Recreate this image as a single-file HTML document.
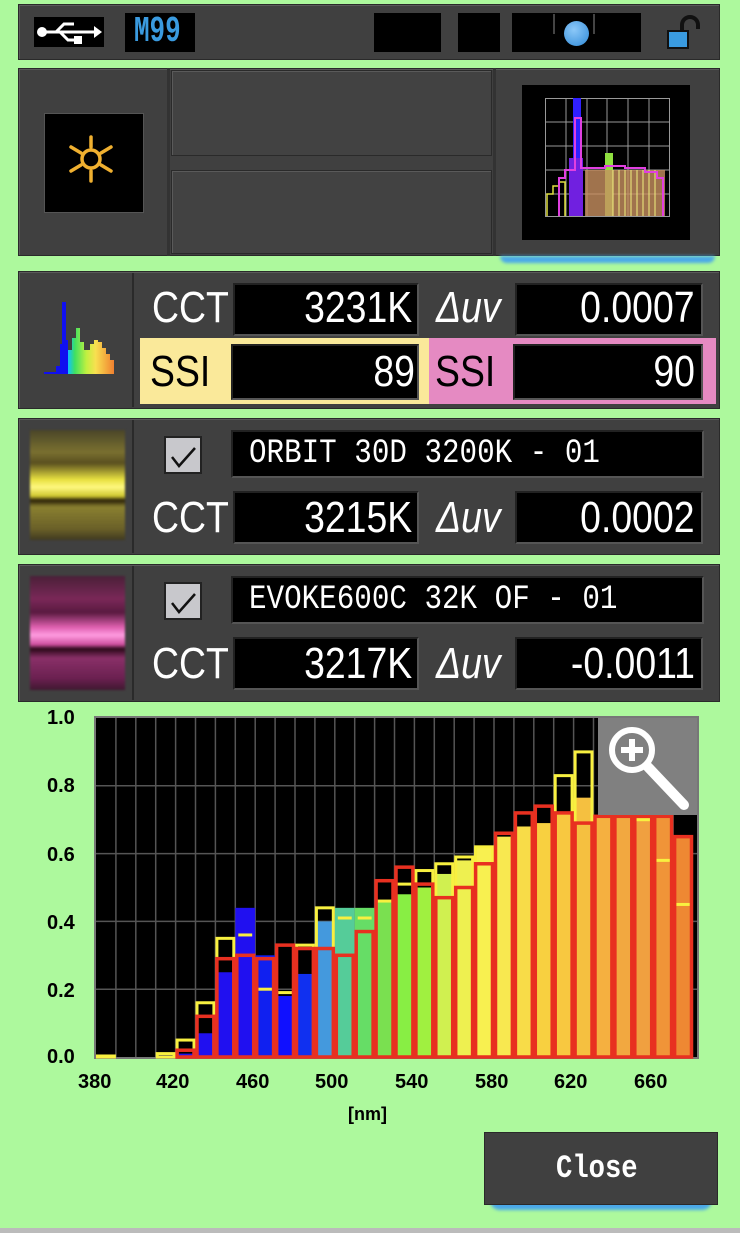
<!DOCTYPE html>
<html><head><meta charset="utf-8">
<style>
*{margin:0;padding:0;box-sizing:border-box}
body{width:740px;height:1233px;background:#adf99d;position:relative;overflow:hidden;font-family:"Liberation Sans Narrow","Liberation Sans",sans-serif}
.a{position:absolute}
.p{position:absolute;background:#404040;border:1px solid #2a2a2a;box-shadow:inset 1px 1px 0 #5a5a5a}
.bk{position:absolute;background:#000;border:2px solid #555;border-top-color:#222;border-left-color:#222}
.t{position:absolute;color:#fff;font-size:44px;line-height:1;white-space:nowrap;transform:scaleX(0.85);transform-origin:left top}
.v{position:absolute;color:#fff;font-size:44px;line-height:1;white-space:nowrap;text-align:right;transform:scaleX(0.85);transform-origin:right top}
.nm{color:#fff;font-size:34px;font-family:"Liberation Mono",monospace;position:absolute;white-space:nowrap;transform:scaleX(0.86);transform-origin:left top}
.cb{position:absolute;width:38px;height:38px;background:#c8c8cc;border:2px solid #222}
.ax{position:absolute;font-family:"Liberation Sans",sans-serif;font-weight:bold;font-size:20px;color:#000;line-height:1}
</style></head><body>
<div class="a" style="left:0;top:1228px;width:740px;height:5px;background:#bbb"></div>
<!-- top bar -->
<div class="p" style="left:18px;top:4px;width:702px;height:56px"></div>
<div class="a" style="left:34px;top:17px;width:70px;height:30px;background:#000"></div>
<svg class="a" style="left:36px;top:20px" width="66" height="24" viewBox="0 0 66 24"><circle cx="6" cy="12" r="5" fill="#fff"/><rect x="6" y="10.5" width="54" height="3" fill="#fff"/><polygon points="58,6 66,12 58,18" fill="#fff"/><path d="M20 12 L28 4 L38 4" stroke="#fff" stroke-width="3" fill="none"/><path d="M24 12 L32 20 L40 20" stroke="#fff" stroke-width="3" fill="none"/><rect x="38" y="16" width="8" height="8" fill="#fff"/></svg>
<div class="a" style="left:125px;top:13px;width:70px;height:39px;background:#000"></div>
<div class="a" style="left:134px;top:11px;color:#3a9be0;font-family:'Liberation Mono',monospace;font-size:36px;font-weight:bold;transform:scaleX(0.72);transform-origin:left top">M99</div>
<div class="a" style="left:374px;top:13px;width:67px;height:39px;background:#000"></div>
<div class="a" style="left:458px;top:13px;width:42px;height:39px;background:#000"></div>
<div class="a" style="left:512px;top:13px;width:129px;height:39px;background:#000"></div>
<div class="a" style="left:553px;top:14px;width:2px;height:20px;background:#444"></div>
<div class="a" style="left:593px;top:14px;width:2px;height:20px;background:#444"></div>
<div class="a" style="left:564px;top:21px;width:25px;height:25px;border-radius:50%;background:radial-gradient(circle at 40% 35%,#8cc8f8,#2f8ad8)"></div>
<svg class="a" style="left:664px;top:15px" width="40" height="36" viewBox="0 0 40 36"><path d="M18 18 V10 a8 8 0 0 1 16 0 V14" stroke="#111" stroke-width="4" fill="none"/><rect x="4" y="16" width="20" height="17" fill="#3a9be0" stroke="#111" stroke-width="2"/></svg>
<!-- second panel -->
<div class="p" style="left:18px;top:68px;width:702px;height:188px"></div>
<div class="a" style="left:167px;top:68px;width:3px;height:188px;background:#333"></div>
<div class="a" style="left:493px;top:68px;width:3px;height:188px;background:#333"></div>
<div class="p" style="left:171px;top:70px;width:321px;height:86px;background:#424242"></div>
<div class="p" style="left:171px;top:170px;width:321px;height:84px;background:#424242"></div>
<div class="a" style="left:44px;top:113px;width:100px;height:100px;background:#000;border:1px solid #555"></div>
<svg class="a" style="left:66px;top:133px" width="50" height="52" viewBox="0 0 50 52"><g stroke="#f0b030" stroke-width="3.5" fill="none" stroke-linecap="round"><circle cx="25" cy="26" r="9"/><line x1="25" y1="4" x2="25" y2="14"/><line x1="25" y1="38" x2="25" y2="48"/><line x1="5" y1="14" x2="15" y2="20"/><line x1="35" y1="32" x2="45" y2="38"/><line x1="5" y1="38" x2="15" y2="32"/><line x1="35" y1="20" x2="45" y2="14"/></g></svg>
<div class="a" style="left:522px;top:85px;width:168px;height:155px;background:#000"></div>
<svg class="a" style="left:545px;top:98px" width="126" height="120" viewBox="0 0 126 120">
<g stroke="#999" stroke-width="1"><rect x="0.5" y="0.5" width="124" height="118" fill="none"/><line x1="21" y1="0" x2="21" y2="119"/><line x1="42" y1="0" x2="42" y2="119"/><line x1="62" y1="0" x2="62" y2="119"/><line x1="83" y1="0" x2="83" y2="119"/><line x1="104" y1="0" x2="104" y2="119"/><line x1="0" y1="24" x2="125" y2="24"/><line x1="0" y1="48" x2="125" y2="48"/><line x1="0" y1="72" x2="125" y2="72"/><line x1="0" y1="96" x2="125" y2="96"/></g>
<path d="M2 118 V96 H8 V88 H14 V84 H20 V118" fill="none" stroke="#e0e040" stroke-width="1.5"/>
<rect x="28" y="0" width="8" height="118" fill="#3020ff"/><rect x="24" y="60" width="14" height="58" fill="#7020e0"/>
<rect x="60" y="55" width="8" height="63" fill="#90e040"/>
<rect x="40" y="72" width="80" height="46" fill="#c89060" opacity=".8"/>
<g stroke="#f0f080" stroke-width="1"><line x1="68" y1="72" x2="68" y2="118"/><line x1="74" y1="72" x2="74" y2="118"/><line x1="80" y1="72" x2="80" y2="118"/><line x1="86" y1="72" x2="86" y2="118"/><line x1="92" y1="72" x2="92" y2="118"/><line x1="98" y1="72" x2="98" y2="118"/><line x1="104" y1="72" x2="104" y2="118"/><line x1="110" y1="72" x2="110" y2="118"/></g>
<path d="M14 118 V80 H20 V72 H30 V20 H36 V70 H60 V68 H80 V70 H100 V74 H112 V80 H118 V118" fill="none" stroke="#e040e0" stroke-width="2"/>
</svg>
<div class="a" style="left:500px;top:256px;width:215px;height:7px;background:#4aa8e8;border-radius:0 0 30px 30px;filter:blur(1.5px)"></div>
<!-- third panel -->
<div class="p" style="left:18px;top:271px;width:702px;height:138px"></div>
<div class="a" style="left:132px;top:273px;width:2px;height:134px;background:#2a2a2a"></div>
<svg class="a" style="left:36px;top:300px" width="82" height="76" viewBox="0 0 82 76"><defs><linearGradient id="sp" x1="0" x2="1"><stop offset="0" stop-color="#10c0ff"/><stop offset=".15" stop-color="#40e060"/><stop offset=".4" stop-color="#c0f040"/><stop offset=".6" stop-color="#f8e050"/><stop offset="1" stop-color="#f08030"/></linearGradient></defs><path d="M32 74 V50 H36 V38 H40 V28 H44 V42 H48 V50 H54 V44 H58 V40 H62 V42 H66 V48 H70 V54 H74 V60 H78 V74Z" fill="url(#sp)"/><path d="M8 74 V72 H20 V66 H24 V44 H26 V2 H30 V40 H32 V74Z" fill="#1010f0"/></svg>
<div class="t" style="left:152px;top:286px">CCT</div>
<div class="bk" style="left:233px;top:283px;width:186px;height:53px"></div>
<div class="v" style="right:328px;top:286px">3231K</div>
<div class="t" style="left:436px;top:286px;font-style:italic">Δuv</div>
<div class="bk" style="left:515px;top:283px;width:188px;height:53px"></div>
<div class="v" style="right:45px;top:286px">0.0007</div>
<div class="a" style="left:140px;top:338px;width:289px;height:66px;background:#fae99a"></div>
<div class="a" style="left:429px;top:338px;width:287px;height:66px;background:#e58ac2"></div>
<div class="t" style="left:150px;top:350px;color:#000">SSI</div>
<div class="t" style="left:435px;top:350px;color:#000">SSI</div>
<div class="bk" style="left:231px;top:344px;width:188px;height:56px"></div>
<div class="bk" style="left:513px;top:344px;width:190px;height:56px"></div>
<div class="v" style="right:325px;top:350px">89</div>
<div class="v" style="right:45px;top:350px">90</div>
<!-- fourth panel -->
<div class="p" style="left:18px;top:418px;width:702px;height:137px"></div>
<div class="a" style="left:132px;top:420px;width:2px;height:133px;background:#2a2a2a"></div>
<div class="a" style="left:30px;top:430px;width:95px;height:110px;background:linear-gradient(#4a4528 0%,#7a7030 20%,#5a5020 30%,#e8e040 45%,#fff880 52%,#d0c830 60%,#2a2008 64%,#8a8030 70%,#6a6028 90%,#403a20 100%);filter:blur(1px)"></div>
<div class="cb" style="left:164px;top:436px"></div>
<svg class="a" style="left:168px;top:440px" width="30" height="30"><path d="M4 17 L11 26 L27 8" stroke="#111" stroke-width="2.5" fill="none"/></svg>
<div class="bk" style="left:231px;top:430px;width:473px;height:48px"></div>
<div class="nm" style="left:249px;top:435px">ORBIT 30D 3200K - 01</div>
<div class="t" style="left:152px;top:496px">CCT</div>
<div class="bk" style="left:233px;top:491px;width:186px;height:53px"></div>
<div class="v" style="right:328px;top:496px">3215K</div>
<div class="t" style="left:436px;top:496px;font-style:italic">Δuv</div>
<div class="bk" style="left:515px;top:491px;width:188px;height:53px"></div>
<div class="v" style="right:45px;top:496px">0.0002</div>
<!-- fifth panel -->
<div class="p" style="left:18px;top:564px;width:702px;height:138px"></div>
<div class="a" style="left:132px;top:566px;width:2px;height:134px;background:#2a2a2a"></div>
<div class="a" style="left:30px;top:576px;width:95px;height:114px;background:linear-gradient(#4a2038 0%,#7a2858 20%,#5a1a40 32%,#e060b0 45%,#ff9ce0 52%,#d050a0 60%,#2a0818 64%,#8a3068 72%,#6a2050 90%,#401830 100%);filter:blur(1px)"></div>
<div class="cb" style="left:164px;top:582px"></div>
<svg class="a" style="left:168px;top:586px" width="30" height="30"><path d="M4 17 L11 26 L27 8" stroke="#111" stroke-width="2.5" fill="none"/></svg>
<div class="bk" style="left:231px;top:576px;width:473px;height:48px"></div>
<div class="nm" style="left:249px;top:581px">EVOKE600C 32K OF - 01</div>
<div class="t" style="left:152px;top:642px">CCT</div>
<div class="bk" style="left:233px;top:637px;width:186px;height:53px"></div>
<div class="v" style="right:328px;top:642px">3217K</div>
<div class="t" style="left:436px;top:642px;font-style:italic">Δuv</div>
<div class="bk" style="left:515px;top:637px;width:188px;height:53px"></div>
<div class="v" style="right:45px;top:642px">-0.0011</div>
<!-- chart -->
<svg id="ch" class="a" style="left:0;top:0" width="740" height="1233"></svg>
<div class="ax" style="left:47px;top:708px">1.0</div>
<div class="ax" style="left:47px;top:776px">0.8</div>
<div class="ax" style="left:47px;top:845px">0.6</div>
<div class="ax" style="left:47px;top:913px">0.4</div>
<div class="ax" style="left:47px;top:981px">0.2</div>
<div class="ax" style="left:47px;top:1047px">0.0</div>
<div class="ax" style="left:78px;top:1072px">380</div>
<div class="ax" style="left:156px;top:1072px">420</div>
<div class="ax" style="left:236px;top:1072px">460</div>
<div class="ax" style="left:315px;top:1072px">500</div>
<div class="ax" style="left:395px;top:1072px">540</div>
<div class="ax" style="left:475px;top:1072px">580</div>
<div class="ax" style="left:554px;top:1072px">620</div>
<div class="ax" style="left:634px;top:1072px">660</div>
<div class="ax" style="left:348px;top:1105px;font-size:18px">[nm]</div>
<!-- close -->
<div class="a" style="left:490px;top:1200px;width:222px;height:10px;background:#4aa8e8;border-radius:0 0 30px 30px;filter:blur(1.5px)"></div>
<div class="a" style="left:484px;top:1132px;width:234px;height:73px;background:#404040;border:1px solid #2a2a2a"></div>
<div class="a" style="left:556px;top:1150px;color:#fff;font-family:'Liberation Mono',monospace;font-weight:bold;font-size:32px;transform:scaleX(0.85);transform-origin:left top">Close</div>
<script>
var s='',X0=96,Y0=1057,H=339,W=19.9;
s+='<rect x="95" y="717" width="603" height="341" fill="#000" stroke="#777" stroke-width="2"/>';
for(var i=1;i<30;i++){var x=X0+i*W;s+='<line x1="'+x+'" y1="718" x2="'+x+'" y2="1057" stroke="#555" stroke-width="1.5"/>';}
[0.2,0.4,0.6,0.8].forEach(function(v){var y=Y0-v*H;s+='<line x1="96" y1="'+y+'" x2="697" y2="'+y+'" stroke="#555" stroke-width="1.5"/>';});
var d=[[0,'#000',0.003,0],[0,'#000',0,0],[0,'#000',0,0],[0.005,'#2010f0',0.01,0],[0.01,'#2010f0',0.05,0.02],[0.07,'#2010f0',0.16,0.12],[0.25,'#2010f0',0.35,0.29],[0.44,'#2010f0',0.36,0.30],[0.30,'#1020f0',0.2,0.29],[0.18,'#1010ff',0.19,0.33],[0.245,'#1030f0',0.33,0.32],[0.40,'#4499dd',0.44,0.32],[0.44,'#55cc99',0.41,0.30],[0.44,'#66dd66',0.41,0.37],[0.46,'#7ae050',0.46,0.52],[0.48,'#88ee44',0.51,0.56],[0.50,'#a0f040',0.55,0.51],[0.54,'#d0f050',0.57,0.47],[0.58,'#eef050',0.59,0.50],[0.62,'#f8f050',0.62,0.57],[0.65,'#f8e850',0,0.66],[0.68,'#f8dc48',0,0.72],[0.69,'#f8d040',0,0.74],[0.72,'#f8c840',0.83,0.72],[0.765,'#f5c040',0.90,0.69],[0.71,'#f5b040',0,0.71],[0.71,'#f2a840',0,0.71],[0.71,'#f0a040',0.70,0.71],[0.71,'#f09438',0.58,0.71],[0.65,'#ee8833',0.45,0.65]];
var ys='',rs='';
d.forEach(function(b,i){var x=X0+i*W;
 if(b[0]>0)s+='<rect x="'+x+'" y="'+(Y0-b[0]*H)+'" width="'+W+'" height="'+(b[0]*H)+'" fill="'+b[1]+'"/>';
 if(b[2]>0){if(b[2]<b[0])ys+='<line x1="'+(x+3)+'" x2="'+(x+W-3)+'" y1="'+(Y0-b[2]*H)+'" y2="'+(Y0-b[2]*H)+'" stroke="#f8f040" stroke-width="3"/>';else ys+='<rect x="'+(x+1.5)+'" y="'+(Y0-b[2]*H)+'" width="'+(W-3)+'" height="'+(b[2]*H)+'" fill="none" stroke="#f8f040" stroke-width="3"/>';}
 if(b[3]>0)rs+='<rect x="'+(x+1.5)+'" y="'+(Y0-b[3]*H)+'" width="'+(W-3)+'" height="'+(b[3]*H)+'" fill="none" stroke="#e83020" stroke-width="3.5"/>';
});
s+=ys+rs;
s+='<rect x="598" y="718" width="99" height="97" fill="#808080"/><circle cx="632" cy="750" r="20" fill="none" stroke="#fff" stroke-width="6"/><line x1="632" y1="739" x2="632" y2="761" stroke="#fff" stroke-width="6"/><line x1="621" y1="750" x2="643" y2="750" stroke="#fff" stroke-width="6"/><line x1="648" y1="767" x2="684" y2="805" stroke="#fff" stroke-width="10" stroke-linecap="round"/>';
document.getElementById('ch').innerHTML=s;
</script>
</body></html>
